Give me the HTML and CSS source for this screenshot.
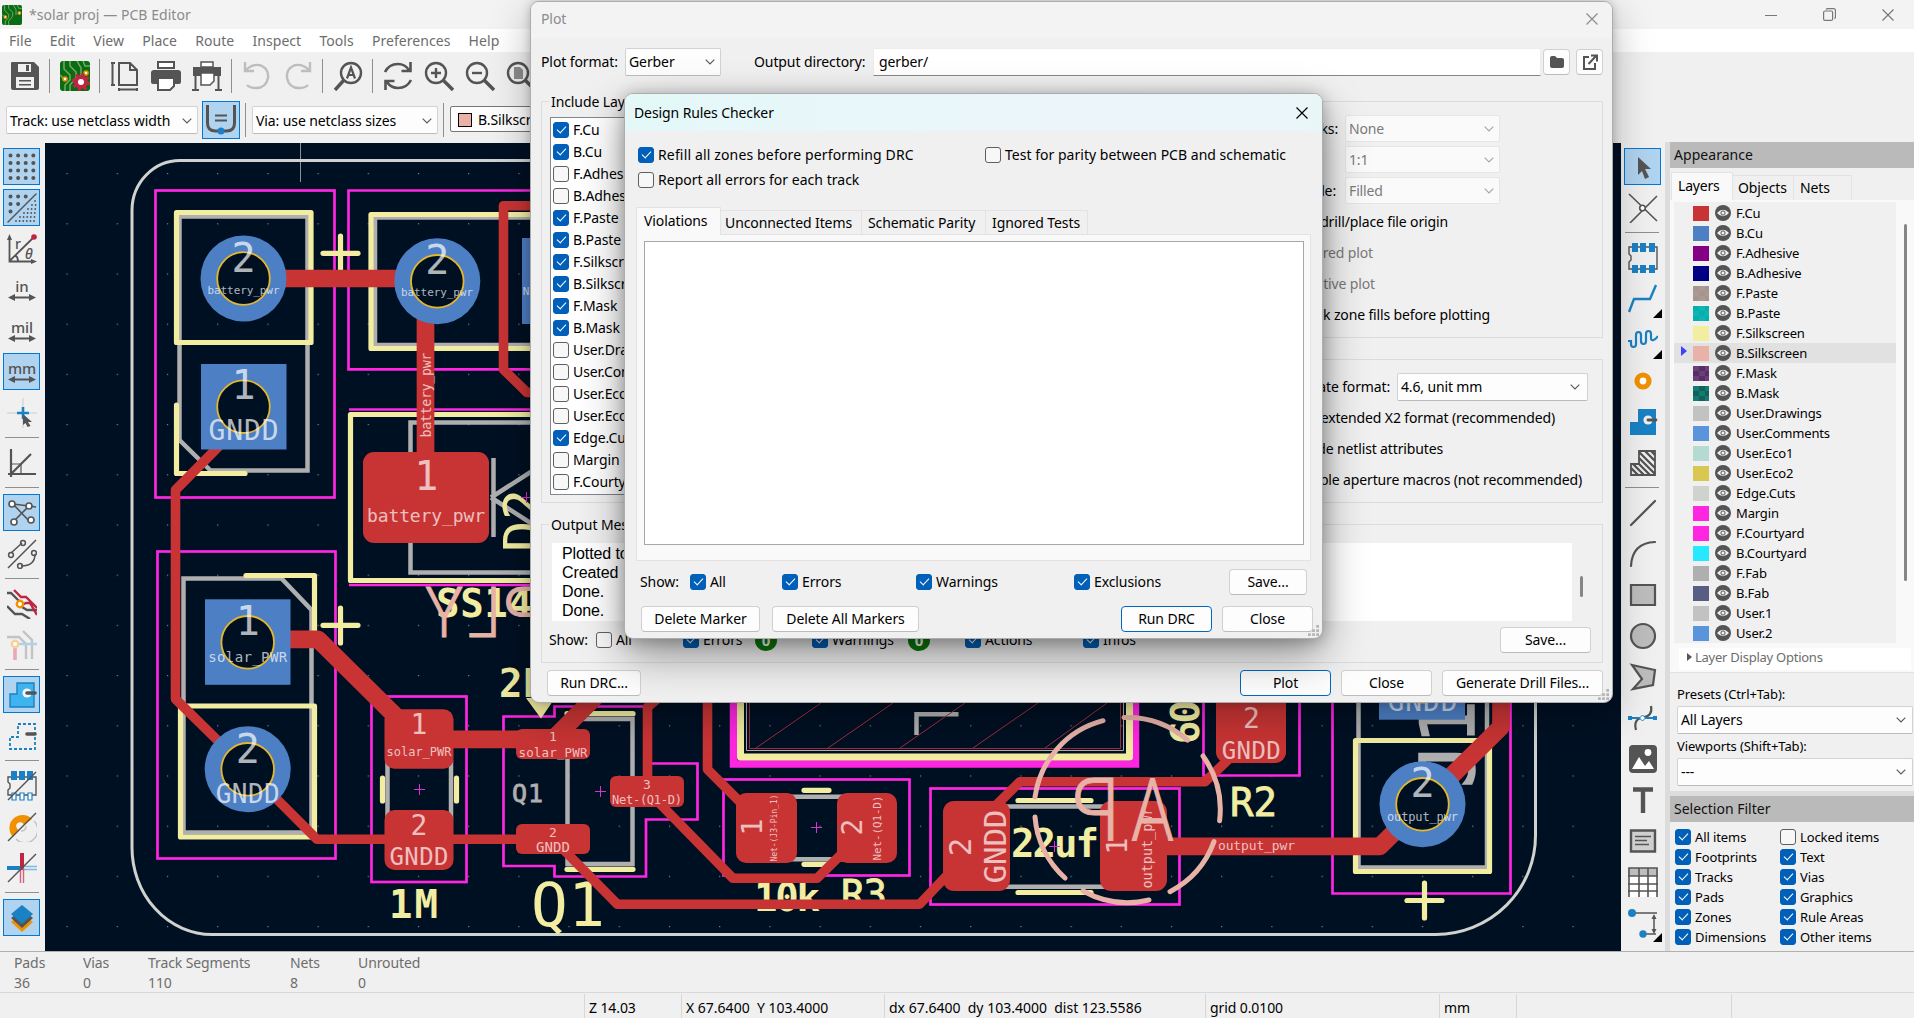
FILE: index.html
```html
<!DOCTYPE html>
<html lang="en">
<head>
<meta charset="utf-8">
<title>*solar proj — PCB Editor</title>
<link rel="stylesheet" href="styles.css">
</head>
<body>
<svg class="defs" width="0" height="0">
  <symbol id="eye" viewBox="0 0 16 16"><circle cx="8" cy="8" r="8" fill="#545454"/><path d="M2 8Q8 1.500 14 8Q8 14.500 2 8Z" fill="#f0f0f0"/><circle cx="8" cy="8" r="2.100" fill="#f0f0f0" stroke="#545454" stroke-width="1"/></symbol>
  <symbol id="chev" viewBox="0 0 10 6"><path d="M.7.7L5 5L9.300.7" fill="none" stroke="currentColor" stroke-width="1.100"/></symbol>
  <symbol id="grip" viewBox="0 0 12 12"><path d="M9 0h3v3h-3zM9 4.500h3v3h-3zM4.500 4.500h3v3h-3zM9 9h3v3h-3zM4.500 9h3v3h-3zM0 9h3v3h-3z" fill="#b5b5b5"/></symbol>
  <symbol id="x" viewBox="0 0 12 12"><path d="M.5.5L11.500 11.500M11.500.5L.5 11.500" fill="none" stroke="currentColor" stroke-width="1.200"/></symbol>
  <symbol id="board" viewBox="0 0 30 30"><rect width="30" height="30" rx="3" fill="#0a6b14"/><path d="M4 0v8l6 6v5l-5 5v6M10 0v5l6 6v6l-6 7v6M17 0l4 7v8M23 0l2 5h5M0 14l4 4" fill="none" stroke="#6fae62" stroke-width="1.500"/><g fill="#fff" stroke="#f29100" stroke-width="1.600"><circle cx="5" cy="18" r="2"/><circle cx="26" cy="12" r="2"/></g></symbol>
</svg>

<header class="titlebar">
  <svg class="app-icon"><use href="#board"/></svg>
  <span>*solar proj — PCB Editor</span>
  <div class="wincontrols">
    <svg width="12" height="12"><path d="M0 6.500h12" stroke="#777"/></svg>
    <svg width="13" height="13" fill="none" stroke="#777" stroke-width="1.200"><rect x=".6" y="3" width="9" height="9.400" rx="1.500"/><path d="M3 1.500Q3.500.6 5 .6h5.500q2 0 2 2v6q0 1.500-1 2"/></svg>
    <svg width="12" height="12" color="#777"><use href="#x"/></svg>
  </div>
</header>
<nav class="menubar"><span>File</span><span>Edit</span><span>View</span><span>Place</span><span>Route</span><span>Inspect</span><span>Tools</span><span>Preferences</span><span>Help</span></nav>

<div class="toolbar top">
  <i class="btn"><svg viewBox="0 0 30 30"><path fill="#545454" d="M2 1h22l5 5v21q0 2-2 2H3q-2 0-2-2V2q0-1 1-1z"/><path fill="#f0f0f0" d="M8 3h13v8H8zM6 16h18v11H6z"/><path fill="#545454" d="M16 4h3v6h-3zM9 19h12v1.500H9zM9 23h12v1.500H9z"/></svg></i>
  <i class="sep"></i>
  <i class="btn"><svg viewBox="0 0 30 30"><use href="#board"/><circle cx="21" cy="21" r="5" fill="#fff" stroke="#bf2641" stroke-width="4"/><circle cx="21" cy="21" r="7.600" fill="none" stroke="#bf2641" stroke-width="3" stroke-dasharray="3 2.970"/></svg></i>
  <i class="sep"></i>
  <i class="btn"><svg viewBox="0 0 30 30" fill="none" stroke="#545454" stroke-width="2"><path d="M9 2h11l7 7v15H9zM20 2v7h7M2.500 2v22M1 2h4M1 24h4M9 28.500h18M9 27v3M27 27v3"/></svg></i>
  <i class="btn"><svg viewBox="0 0 30 30"><path d="M7 1h16v6H7z" fill="#fff" stroke="#545454" stroke-width="2"/><path d="M3 9h24q3 0 3 3v9q0 2-2 2H2q-2 0-2-2v-9q0-3 3-3z" fill="#545454"/><path d="M7 17h16v8l-4 4H7z" fill="#fff" stroke="#545454" stroke-width="2"/></svg></i>
  <i class="btn"><svg viewBox="0 0 30 30"><path d="M9 1h12v5H9z" fill="#fff" stroke="#545454" stroke-width="1.500"/><path d="M1 6h28v9H1z" fill="#545454"/><path d="M9 12h13v8l-4 4H9z" fill="#fff" stroke="#545454" stroke-width="1.500"/><path d="M3.500 14v14M26.500 14v14M0 29h7M23 29h7" stroke="#545454" stroke-width="2"/></svg></i>
  <i class="sep"></i>
  <i class="btn"><svg viewBox="0 0 30 30" fill="none" stroke="#bdbdbd" stroke-width="2.400"><path d="M3 1v9h9M4 9Q11 2 19 4.500Q27 8 26 17Q24 27 14 27Q8 27 5 24"/></svg></i>
  <i class="btn"><svg viewBox="0 0 30 30" fill="none" stroke="#bdbdbd" stroke-width="2.400"><path d="M27 1v9h-9M26 9Q19 2 11 4.500Q3 8 4 17Q6 27 16 27Q22 27 25 24"/></svg></i>
  <i class="sep"></i>
  <i class="btn"><svg viewBox="0 0 30 30" fill="none" stroke="#545454"><circle cx="18" cy="12" r="10" stroke-width="2.400"/><path d="M11 19L2 29" stroke-width="3.400"/><path d="M14 17.500L18 6.500L22 17.500M15.500 14h5" stroke-width="2.200"/></svg></i>
  <i class="sep"></i>
  <i class="btn"><svg viewBox="0 0 30 30" fill="none" stroke="#545454" stroke-width="2.600"><path d="M2 11Q6 3 15 3Q22 3 26 9M27.500 1v9h-9M28 19Q24 27 15 27Q8 27 4 21M2.500 29v-9h9"/></svg></i>
  <i class="btn"><svg viewBox="0 0 30 30" fill="none" stroke="#545454"><circle cx="12" cy="12" r="10" stroke-width="2.400"/><path d="M19 19L29 29" stroke-width="3.400"/><path d="M7 12h10M12 7v10" stroke-width="2.400"/></svg></i>
  <i class="btn"><svg viewBox="0 0 30 30" fill="none" stroke="#545454"><circle cx="12" cy="12" r="10" stroke-width="2.400"/><path d="M19 19L29 29" stroke-width="3.400"/><path d="M7 12h10" stroke-width="2.400"/></svg></i>
  <i class="btn"><svg viewBox="0 0 30 30" fill="none" stroke="#545454"><circle cx="12" cy="12" r="10" stroke-width="2.400"/><path d="M19 19L29 29" stroke-width="3.400"/><path d="M8 6h6l3 3v9H8z" fill="#8c8c8c" stroke="none"/></svg></i>
</div>
<div class="toolbar second">
  <div class="combo track"><span>Track: use netclass width</span><svg><use href="#chev"/></svg></div>
  <i class="btn on"><svg viewBox="0 0 30 30" fill="none" stroke="#545454" stroke-width="3"><path d="M1.500 0v18q0 8 8 8h11q8 0 8-8V0"/><path d="M9 10.500h12M9 15.500h12" stroke-width="1.800"/><circle cx="15" cy="26" r="3.500" fill="#1a81c4" stroke="none"/></svg></i>
  <i class="vsep"></i>
  <div class="combo via"><span>Via: use netclass sizes</span><svg><use href="#chev"/></svg></div>
  <i class="vsep"></i>
  <div class="combo layer"><b></b><span>B.Silkscreen</span></div>
</div>

<main class="work">
  <div class="toolbar side left">
    <i class="btn on"><svg viewBox="0 0 30 30"><path d="M3.500 3.500h24M3.500 11h24M3.500 18.500h24M3.500 26h24" stroke="#545454" stroke-width="4" stroke-linecap="round" stroke-dasharray="0.01 7.600"/></svg></i>
    <i class="btn on"><svg viewBox="0 0 30 30"><g stroke="#545454" stroke-linecap="round" fill="none"><path d="M3.500 3.500h17M3.500 11h10M3.500 18.500h2" stroke-width="4" stroke-dasharray="0.01 7.600"/><path d="M28 8h1M25 12h4M21 16h8M17 20h12M13 24h16M9 28h20" stroke-width="1.800" stroke-dasharray="0.01 3.600"/><path d="M1 29L29 1" stroke-width="1.400"/></g></svg></i>
    <i class="btn"><svg viewBox="0 0 30 30"><g fill="none" stroke="#545454" stroke-width="1.800"><path d="M2.500 4v23.500H26M2.500 27L26 4M8 21q3 2 3 6"/></g><path d="M0 6L2.500 0L5 6zM24 25l6 2.500l-6 2.500z" fill="#545454"/><circle cx="27" cy="3" r="2.800" fill="#bf2641"/><text x="8" y="15" class="ico-t" font-size="14">r</text><text x="18" y="25" class="ico-t" font-size="14" font-style="italic">θ</text></svg></i>
    <i class="btn"><svg viewBox="0 0 30 30"><text x="15" y="16.500" class="ico-t" font-size="15" text-anchor="middle">in</text><path d="M5 22.500h20" stroke="#545454" stroke-width="2"/><path d="M8 19v7L1 22.500zM22 19v7l7-3.500z" fill="#545454"/></svg></i>
    <i class="btn"><svg viewBox="0 0 30 30"><text x="15" y="16.500" class="ico-t" font-size="15" text-anchor="middle">mil</text><path d="M5 22.500h20" stroke="#545454" stroke-width="2"/><path d="M8 19v7L1 22.500zM22 19v7l7-3.500z" fill="#545454"/></svg></i>
    <i class="btn on"><svg viewBox="0 0 30 30"><text x="15" y="16.500" class="ico-t" font-size="15" text-anchor="middle">mm</text><path d="M5 22.500h20" stroke="#545454" stroke-width="2"/><path d="M8 19v7L1 22.500zM22 19v7l7-3.500z" fill="#545454"/></svg></i>
    <i class="btn"><svg viewBox="0 0 30 30"><path d="M0 15h30M16 0v30" stroke="#ccc"/><path d="M10 15h12M16 9v12" stroke="#1a81c4" stroke-width="2.600"/><path d="M16 16l9 8h-4l2.500 4l-3 1l-2-4l-2.500 2z" fill="#545454"/></svg></i>
    <i class="sep"></i>
    <i class="btn"><svg viewBox="0 0 30 30" fill="none" stroke="#545454" stroke-width="2.200"><path d="M4 1v28M1 26h28M4 26L24 6"/><path d="M5 16h9v10" stroke-width="1.200"/></svg></i>
    <i class="sep"></i>
    <i class="btn on"><svg viewBox="0 0 30 30" fill="none" stroke="#545454" stroke-width="1.600"><path d="M6 6L23 24M7 23L22 8M6 6L22 8l7 1"/><g fill="#fff"><circle cx="5" cy="6" r="3"/><circle cx="22" cy="8" r="3"/><circle cx="24" cy="22" r="3"/><circle cx="7" cy="24" r="3"/></g></svg></i>
    <i class="btn"><svg viewBox="0 0 30 30" fill="none" stroke="#545454" stroke-width="1.500"><path d="M1 29L29 1M4 14L15 4M28 15Q28 27 14 27"/><circle cx="16" cy="4" r="2.400"/><circle cx="4" cy="16" r="2.400"/><circle cx="27" cy="14" r="2.400"/><circle cx="13" cy="27" r="2.400"/></svg></i>
    <i class="sep"></i>
    <i class="btn"><svg viewBox="0 0 30 30" fill="none" stroke-width="2.400"><path d="M0 4h4l11 11M0 17l8 8h7l8 5M15 18l5 3h10" stroke="#545454"/><path d="M7 1l7 7h5l11 11M15 16l4-2h4l7 12" stroke="#bf2641"/><circle cx="13" cy="15" r="3.200" fill="#fff" stroke="#f29100"/></svg></i>
    <i class="btn"><svg viewBox="0 0 30 30" fill="none" stroke-width="2.400"><path d="M0 7h12l7 7v15M16 1l9 9v19" stroke="#c3c3c3"/><path d="M8 16v14" stroke="#e8a9b4" stroke-width="3.600"/><path d="M10 14h20" stroke="#a9d2ec"/><circle cx="8" cy="14" r="3.200" fill="#fff" stroke="#fbcf94"/></svg></i>
    <i class="sep"></i>
    <i class="btn on"><svg viewBox="0 0 30 30"><path d="M10 3h17v24H3V14h7z" fill="#3db4ee" stroke="#1a81c4" stroke-width="1.400"/><circle cx="20" cy="13" r="4.600" fill="#eef6fc"/><path d="M20 13h8" stroke="#545454" stroke-width="3.600" stroke-linecap="round"/></svg></i>
    <i class="btn"><svg viewBox="0 0 30 30"><path d="M11 3h17v25H3V16h8z" fill="none" stroke="#1a81c4" stroke-width="1.800" stroke-dasharray="3 2"/><path d="M20 13h8" stroke="#545454" stroke-width="3.600" stroke-linecap="round"/></svg></i>
    <i class="sep"></i>
    <i class="btn"><svg viewBox="0 0 30 30"><path d="M1 6h28v18H1v-5l2-2v-4l-2-2z" fill="none" stroke="#545454" stroke-width="1.400"/><path d="M4 0h6v9H4zM12 0h6v9h-6zM20 0h6v9h-6z" fill="#1a81c4"/><path d="M5 22h4v7H5zM13 22h4v7h-4zM21 22h4v7h-4z" fill="#fff" stroke="#1a81c4" stroke-width="1.200"/><path d="M1 29L29 1" stroke="#545454" stroke-width="1.400"/></svg></i>
    <i class="btn"><svg viewBox="0 0 30 30" fill="none"><path d="M6 25A12.500 12.500 0 1 1 25 7L17 13A4 4 0 1 0 12 18z" fill="#f29100"/><path d="M27 9A12.500 12.500 0 0 1 9 27M19 14q0 5-5 5" stroke="#c4c4c4" stroke-width="1.500"/><path d="M1 29L29 1" stroke="#545454" stroke-width="1.400"/></svg></i>
    <i class="btn"><svg viewBox="0 0 30 30"><path d="M0 15h15" stroke="#1a81c4" stroke-width="4"/><path d="M15 13.500h15M15 16.500h15" stroke="#7db8dd" stroke-width="1.400"/><path d="M15 0v17" stroke="#bf2641" stroke-width="4"/><path d="M13.500 15v15M16.500 15v15" stroke="#d0657a" stroke-width="1.400"/><path d="M1 29L29 1" stroke="#545454" stroke-width="1.400"/></svg></i>
    <i class="sep"></i>
    <i class="btn on"><svg viewBox="0 0 30 30"><path d="M4 19l11 10l11-10l-4-3H8z" fill="#f29100"/><path d="M4 15l11 10l11-10l-4-3H8z" fill="#545454"/><path d="M15 2L26 11L15 21L4 11z" fill="#1a81c4"/></svg></i>
  </div>

  <svg class="canvas" viewBox="45 143 1576 808" width="1576" height="808">
    <defs><pattern id="dots" x="66.500" y="173" width="50.200" height="50.200" patternUnits="userSpaceOnUse"><rect width="1.200" height="1.200" fill="#7d838c"/></pattern></defs>
    <rect x="45" y="143" width="1576" height="808" fill="#001023"/>
    <rect x="45" y="143" width="1576" height="808" fill="url(#dots)"/>
    <path d="M300.500 143v39" stroke="#8a919a" fill="none"/>
    <path class="edge" d="M180 160.500H1450Q1535.500 160.500 1535.500 250V835A100 99 0 0 1 1436 934.500H212A80 87 0 0 1 132 847V210A48 50 0 0 1 180 160.500Z"/>

    <!-- fabrication outlines -->
    <g class="fab">
      <path d="M179.500 216.500H307.500V470.500H210.500L179.500 440Z"/>
      <path d="M540 217.500H375V345H540"/>
      <path d="M540 422.500H410.500V572.500H540M493.500 458V537M491 497.500L540 466M491 497.500L540 529"/>
      <path d="M183.500 578.500H281.500L311.500 610V832.500H183.500Z"/>
      <path d="M387.500 760V820M451 760V820"/>
      <rect x="567.500" y="719" width="65" height="145"/>
      <path d="M790 796.700H845M790 859.300H845M1005 806.500H1105M1005 886.700H1105M916.500 735V714.300H958.500"/>
      <path d="M1358.500 700V867.500H1487V690"/>
    </g>
    <g class="crt">
      <rect x="155.500" y="190.500" width="179" height="307"/>
      <path d="M540 190.500H348.500V369.300H540M349 409.500H540M349 585H540"/>
      <rect x="157.500" y="551.500" width="178" height="307"/>
      <rect x="371.500" y="696.500" width="95" height="185.500"/>
      <path d="M503.500 716.500H554.500V706.500H646V763.500H697.500V819.500H646V876.500H554.500V866H503.500Z"/>
      <rect x="723.500" y="779.500" width="186" height="96"/>
      <rect x="930.500" y="788.500" width="249" height="116"/>
      <path d="M1203.500 690V775.500H1299.500V690M1332.500 690V893.500H1510.500V690"/>
      <path d="M733.500 690V764H1135.500V690" stroke-width="7.500"/>
    </g>
    <g class="silk">
      <rect x="176.500" y="212.500" width="134.500" height="130"/>
      <path d="M176.500 405V473.500H245M540 214.500H371V348.500H540M540 414.500H350.500V580.500H540"/>
      <path d="M246 575.500H314.500V640M180.500 706H314.500V837H180.500Z"/>
      <path d="M323 253.300H358M340.500 236V272M323 625.300H358M340.500 608V643M1407 900.500H1442M1424.500 883V918"/>
      <path d="M382.500 778V801M456.500 778V801M567 713.700H633M567 869.300H633M804 790.300H829M804 864.300H829M1018 800.500H1091M1018 892.500H1091"/>
      <path d="M740.500 690V757H1129.500V690" stroke-width="7"/>
      <path d="M1355.500 740.500H1489.500V871.500H1355.500Z"/>
      <path d="M526 698H555L541 718.500Z" fill="#f2eda1" stroke="none"/>
    </g>
    <g fill="none"><path d="M746.500 690V750.500H1123.500V690" stroke="#afafaf"/><path d="M749.500 690V748.500H1120.500V690M756 748L821 703M828 748L893 703M900 748L965 703M973 748L1038 703M1045 748L1107 703" stroke="#a02e36"/></g>
    <g class="k fabt">
      <text x="512" y="802" font-size="25" textLength="31" stroke="#afafaf" stroke-width=".8">Q1</text>
      <text transform="translate(1474 788) rotate(-90)" font-size="74" textLength="88" stroke="#afafaf" stroke-width="1.500">J1</text>
    </g>
    <g class="k silkt">
      <text transform="translate(541 552) rotate(-90)" font-size="52" textLength="63">D2</text>
      <g font-weight="bold" font-size="39">
        <text x="436" y="617" textLength="96">SS14</text>
        <text x="499" y="696.500" textLength="48">2N</text>
        <text x="389" y="917.500" textLength="49">1M</text>
        <text x="754" y="910.500" textLength="66">10k</text>
        <text x="1011" y="856.500" textLength="88">22uf</text>
        <text transform="translate(1199 744) rotate(-90)" textLength="44">60</text>
      </g>
      <text x="841" y="908" font-size="39" textLength="46" class="semi">R3</text>
      <text x="1230" y="815.500" font-size="39" textLength="47" class="semi">R2</text>
      <text x="531" y="926" font-size="61" textLength="74">Q1</text>
    </g>

    <!-- copper tracks -->
    <g class="cu">
      <path class="wide" d="M243 278.500H437M425.500 281V497M247 639.300H318L419 739.300H553L612 680"/>
      <path class="wide" d="M1134 846.300H1380L1501 727V690"/>
      <path d="M540 205.700H503.500V369.500L527 392.500H540M225 440L175.500 490V699L247 769.300L317 839.300H553"/>
      <path d="M668 690L647.500 707V791L733 878.300H817L867 829M553 839L617.500 904.300H919.500L975 846"/>
      <path d="M707.500 690V769.300L766 828M976 825L1020 781.700H1205L1251 738"/>
    </g>
    <g fill="#c83434">
      <rect x="363" y="452" width="126" height="91" rx="11"/>
      <rect x="384.500" y="709.300" width="69" height="59.500" rx="10"/><rect x="384.500" y="810" width="69" height="60" rx="10"/>
      <rect x="516" y="729" width="74" height="30" rx="6"/><rect x="516" y="824" width="74" height="30" rx="6"/><rect x="610" y="776" width="74" height="31" rx="6"/>
      <rect x="736" y="793" width="61" height="70" rx="10"/><rect x="837" y="793" width="60" height="70" rx="10"/>
      <rect x="943" y="801" width="67" height="90" rx="11"/><rect x="1100" y="801" width="67" height="90" rx="11"/>
      <rect x="1216" y="680" width="70" height="83" rx="11"/>
    </g>
    <g fill="#4d7fc4">
      <circle cx="243.500" cy="278.500" r="43"/><circle cx="437.300" cy="281.300" r="43"/><rect x="201" y="364" width="85.500" height="85.500"/>
      <rect x="522" y="238" width="40" height="86"/><rect x="205" y="599.300" width="85.500" height="85.500"/><circle cx="247.700" cy="769.300" r="43"/>
      <circle cx="1422.500" cy="804.300" r="43"/><rect x="1379" y="634" width="86" height="85.700"/>
    </g>
    <g fill="#001023" stroke="#e3b72e" stroke-width="1.800">
      <circle cx="243.500" cy="278.500" r="26.300"/><circle cx="437.300" cy="281.300" r="26.300"/><circle cx="243.500" cy="406.700" r="26.300"/>
      <circle cx="247.700" cy="642.300" r="26.300"/><circle cx="247.700" cy="769.300" r="26.300"/><circle cx="1422.500" cy="804.300" r="26.300"/><circle cx="1422.500" cy="676.500" r="26.300"/>
    </g>
    <g class="k padt">
      <g font-size="40">
        <text x="243.500" y="271.700">2</text><text x="437.300" y="274">2</text><text x="243.500" y="399">1</text><text x="247.700" y="634.500">1</text><text x="247.700" y="763">2</text><text x="1422.500" y="797">2</text><text x="426.300" y="489.500">1</text>
      </g>
      <g font-size="28">
        <text x="419" y="733.500">1</text><text x="419" y="834.500">2</text><text x="1251.400" y="728">2</text>
        <text transform="translate(761.500 827) rotate(-90)">1</text><text transform="translate(862 827) rotate(-90)">2</text>
        <text transform="translate(970.500 847) rotate(-90)" font-size="31">2</text><text transform="translate(1127 846) rotate(-90)">1</text>
        <text x="243.500" y="440" textLength="70">GNDD</text><text x="1422.500" y="710.700" textLength="70">GNDD</text>
        <text x="247.700" y="802.500" textLength="64" font-size="26">GNDD</text>
        <text x="419" y="864.500" textLength="59" font-size="24">GNDD</text><text x="1251.200" y="758.700" textLength="59" font-size="24">GNDD</text>
        <text transform="translate(1005.500 846.500) rotate(-90)" textLength="74" font-size="31">GNDD</text>
      </g>
      <g font-size="13">
        <text x="553" y="741">1</text><text x="553" y="836.500">2</text><text x="647" y="789">3</text>
        <text x="553" y="852" textLength="34" font-size="14">GNDD</text>
      </g>
      <text x="243.500" y="294" font-size="11" textLength="72">battery_pwr</text><text x="437" y="296" font-size="11" textLength="72">battery_pwr</text>
      <text transform="translate(430.500 395) rotate(-90)" font-size="13.500" textLength="85">battery_pwr</text>
      <text x="426" y="521.500" font-size="18" textLength="118">battery_pwr</text>
      <text x="247.700" y="662" font-size="14" textLength="79">solar_PWR</text><text x="419" y="756" font-size="12" textLength="65">solar_PWR</text><text x="553" y="757" font-size="12.500" textLength="69">solar_PWR</text>
      <text x="647" y="804" font-size="12" textLength="70">Net-(Q1-D)</text><text x="536" y="295" font-size="11">Net-</text>
      <text transform="translate(776.500 828) rotate(-90)" font-size="8.200" textLength="67">Net-(J3-Pin_1)</text><text transform="translate(881 828) rotate(-90)" font-size="11" textLength="65">Net-(Q1-D)</text>
      <text transform="translate(1152 848) rotate(-90)" font-size="13.500" textLength="81">output_pwr</text>
      <text x="1256.500" y="850" font-size="13" textLength="77">output_pwr</text><text x="1422.500" y="821" font-size="12" textLength="71">output_pwr</text>
    </g>
    <g class="bsilk">
      <path d="M1035 797A92 92 0 0 1 1103 720.700M1124 717.500A92 92 0 0 1 1187.500 740M1203 756A92 92 0 0 1 1219.600 820.700M1214 841.700A92 92 0 0 1 1170 891.700M1149 900A92 92 0 0 1 1083 891M1065 878A92 92 0 0 1 1035 817"/>
      <g class="bt">
        <text transform="translate(1174 840) scale(-1 1)" font-size="88" textLength="43" lengthAdjust="spacingAndGlyphs">A</text>
        <text transform="translate(1120 840) scale(-1 1)" font-size="88" textLength="48" lengthAdjust="spacingAndGlyphs">P</text>
        <text transform="translate(547 637) scale(-1 1)" font-size="71">P</text>
        <text transform="translate(501 637) scale(-1 1)" font-size="71" textLength="33" lengthAdjust="spacingAndGlyphs">L</text>
        <text transform="translate(463 637) scale(-1 1)" font-size="71" textLength="38" lengthAdjust="spacingAndGlyphs">Y</text>
      </g>
    </g>
    <path d="M521 497.500h11M526.500 492v11M414 789.500h11M419.500 784v11M595 791.500h11M600.500 786v11M811 827.500h11M816.500 822v11M1049 846.500h11M1054.500 841v11" stroke="#e02fd0"/>
  </svg>

  <div class="toolbar side right">
    <i class="btn on"><svg viewBox="0 0 30 30"><path d="M10 5l13 12h-6l4 8l-4 2l-3-8l-4 4z" fill="#545454"/></svg></i>
    <i class="btn"><svg viewBox="0 0 30 30" fill="none" stroke="#545454" stroke-width="1.600"><path d="M1 1L29 28M29 3L2 30"/><circle cx="14.500" cy="15" r="2.800" fill="#fff"/></svg></i>
    <i class="sep"></i>
    <i class="btn"><svg viewBox="0 0 30 30"><path d="M1 4h28v22H1v-7l2-2v-4l-2-2z" fill="none" stroke="#545454" stroke-width="1.400"/><path d="M4 0h6v9H4zM12 0h6v9h-6zM21 0h6v9h-6zM4 22h6v8H4zM12 22h6v8h-6zM21 22h6v8h-6z" fill="#1a81c4"/></svg></i>
    <i class="btn more"><svg viewBox="0 0 30 30"><path d="M1 28L6 15H22L28 1" fill="none" stroke="#1a81c4" stroke-width="2.400"/></svg></i>
    <i class="btn more"><svg viewBox="0 0 30 30"><path d="M0 16h3v3q0 3 2.500 3T8 19V10q0-3 2.500-3T13 10v6q0 3 2.500 3T18 16V9q0-3 2.500-3T23 9v4q0 3 2.500 2T30 11" fill="none" stroke="#1a81c4" stroke-width="2.200"/></svg></i>
    <i class="btn"><svg viewBox="0 0 30 30"><circle cx="15" cy="15" r="6" fill="#fff" stroke="#f29100" stroke-width="5.200"/></svg></i>
    <i class="btn"><svg viewBox="0 0 30 30"><path d="M10 2h18v26H2V15h8z" fill="#1a81c4"/><circle cx="20" cy="13" r="4.600" fill="#eee"/><path d="M20 13h8" stroke="#545454" stroke-width="2.800" stroke-linecap="round"/></svg></i>
    <i class="btn"><svg viewBox="0 0 30 30"><path d="M11 3h16v24H3V16h8z" fill="none" stroke="#545454" stroke-width="1.800"/><path d="M3 20l7 7M5 16l11 11M11 16l11 11M11 10l16 16M11 4l16 16M17 3l10 10M23 3l4 4" stroke="#545454" stroke-width="2.400"/></svg></i>
    <i class="sep"></i>
    <i class="btn"><svg viewBox="0 0 30 30"><path d="M3 27L27 3" stroke="#545454" stroke-width="2.200" stroke-linecap="round"/></svg></i>
    <i class="btn"><svg viewBox="0 0 30 30"><path d="M3 27Q4 4 27 3" fill="none" stroke="#545454" stroke-width="2.200" stroke-linecap="round"/></svg></i>
    <i class="btn"><svg viewBox="0 0 30 30"><path d="M3 5h24v20H3z" fill="#bdbdbd" stroke="#545454" stroke-width="2.200"/></svg></i>
    <i class="btn"><svg viewBox="0 0 30 30"><circle cx="15" cy="15" r="12" fill="#bdbdbd" stroke="#545454" stroke-width="2.200"/></svg></i>
    <i class="btn"><svg viewBox="0 0 30 30"><path d="M4 3L27 8L25 23L5 27L14 17Z" fill="#bdbdbd" stroke="#545454" stroke-width="2.200"/></svg></i>
    <i class="btn"><svg viewBox="0 0 30 30" fill="none"><path d="M8 27Q5 16 15 14.500T23 3" stroke="#545454" stroke-width="2.200"/><path d="M1 15h27" stroke="#1a81c4" stroke-width="2"/><path d="M0 13h4v4H0zM25 13h4v4h-4z" fill="#1a81c4"/><path d="M14.500 12l3 3l-3 3l-3-3z" fill="#fff" stroke="#1a81c4"/></svg></i>
    <i class="btn"><svg viewBox="0 0 30 30"><rect x="1" y="1" width="28" height="28" rx="4" fill="#545454"/><path d="M4 25l7-12l6 9l4-5l5 8z" fill="#fff"/><circle cx="20" cy="8.500" r="3.400" fill="#fff"/></svg></i>
    <i class="btn"><svg viewBox="0 0 30 30"><path d="M5 4.500h20M15 3v25" stroke="#545454" stroke-width="4.400"/></svg></i>
    <i class="btn"><svg viewBox="0 0 30 30"><path d="M3 4.500h24v21H3z" fill="#cfcfcf" stroke="#545454" stroke-width="2.400"/><path d="M7 10.500h16M7 14.500h12M7 18.500h14" stroke="#545454" stroke-width="1.600"/></svg></i>
    <i class="btn"><svg viewBox="0 0 30 30"><path d="M1 1h28v29H1z" fill="#fff"/><path d="M0 1h30v8H0z" fill="#bdbdbd"/><path d="M1 30V1h28v29M0 9h30M0 17h30M0 24h30M11 1v29M20 1v29" fill="none" stroke="#545454" stroke-width="1.600"/></svg></i>
    <i class="btn more"><svg viewBox="0 0 30 30"><path d="M4 5h25M15 26h13M26 8v16" stroke="#545454" stroke-width="1.500"/><path d="M26 6l2.500 5h-5zM26 26l2.500-5h-5z" fill="#545454"/><circle cx="4" cy="5" r="4" fill="#1a81c4"/><circle cx="15" cy="26" r="3.700" fill="#1a81c4"/></svg></i>
  </div>

  <aside class="panel">
    <h2>Appearance</h2>
    <div class="tabs"><span class="sel">Layers</span><span>Objects</span><span class="nets">Nets</span></div>
    <div class="tabbody">
      <div class="layers">
        <div><b style="background:#c83434"></b><svg><use href="#eye"/></svg>F.Cu</div>
        <div><b style="background:#4d7fc4"></b><svg><use href="#eye"/></svg>B.Cu</div>
        <div><b style="background:#840084"></b><svg><use href="#eye"/></svg>F.Adhesive</div>
        <div><b style="background:#000084"></b><svg><use href="#eye"/></svg>B.Adhesive</div>
        <div><b class="chk" style="background-color:#a6958d"></b><svg><use href="#eye"/></svg>F.Paste</div>
        <div><b class="chk" style="background-color:#03b0ac"></b><svg><use href="#eye"/></svg>B.Paste</div>
        <div><b style="background:#f2eda1"></b><svg><use href="#eye"/></svg>F.Silkscreen</div>
        <div class="cur"><b style="background:#e8b2a7"></b><svg><use href="#eye"/></svg>B.Silkscreen</div>
        <div><b class="chk dk" style="background-color:#6c3c7c"></b><svg><use href="#eye"/></svg>F.Mask</div>
        <div><b class="chk dk" style="background-color:#147a72"></b><svg><use href="#eye"/></svg>B.Mask</div>
        <div><b style="background:#c2c2c2"></b><svg><use href="#eye"/></svg>User.Drawings</div>
        <div><b style="background:#5994dc"></b><svg><use href="#eye"/></svg>User.Comments</div>
        <div><b style="background:#b4dbd2"></b><svg><use href="#eye"/></svg>User.Eco1</div>
        <div><b style="background:#d8c852"></b><svg><use href="#eye"/></svg>User.Eco2</div>
        <div><b style="background:#d0d2cd"></b><svg><use href="#eye"/></svg>Edge.Cuts</div>
        <div><b style="background:#ff26e2"></b><svg><use href="#eye"/></svg>Margin</div>
        <div><b style="background:#ff26e2"></b><svg><use href="#eye"/></svg>F.Courtyard</div>
        <div><b style="background:#26e9ff"></b><svg><use href="#eye"/></svg>B.Courtyard</div>
        <div><b style="background:#afafaf"></b><svg><use href="#eye"/></svg>F.Fab</div>
        <div><b style="background:#585d84"></b><svg><use href="#eye"/></svg>B.Fab</div>
        <div><b style="background:#c2c2c2"></b><svg><use href="#eye"/></svg>User.1</div>
        <div><b style="background:#5994dc"></b><svg><use href="#eye"/></svg>User.2</div>
      </div>
      <i class="scroll"></i>
    </div>
    <div class="ldo"><span>Layer Display Options</span></div>
    <div class="presets">
      <label>Presets (Ctrl+Tab):</label><div class="combo"><span>All Layers</span><svg><use href="#chev"/></svg></div>
      <label>Viewports (Shift+Tab):</label><div class="combo"><span>---</span><svg><use href="#chev"/></svg></div>
    </div>
    <h2 class="sf">Selection Filter</h2>
    <div class="filter">
      <span><i class="cb on"></i>All items</span><span><i class="cb"></i>Locked items</span>
      <span><i class="cb on"></i>Footprints</span><span><i class="cb on"></i>Text</span>
      <span><i class="cb on"></i>Tracks</span><span><i class="cb on"></i>Vias</span>
      <span><i class="cb on"></i>Pads</span><span><i class="cb on"></i>Graphics</span>
      <span><i class="cb on"></i>Zones</span><span><i class="cb on"></i>Rule Areas</span>
      <span><i class="cb on"></i>Dimensions</span><span><i class="cb on"></i>Other items</span>
    </div>
  </aside>
</main>

<div class="msgpanel">
  <div>Pads<br>36</div><div>Vias<br>0</div><div>Track Segments<br>110</div><div>Nets<br>8</div><div>Unrouted<br>0</div>
</div>
<footer class="status"><span></span><span>Z 14.03</span><span>X 67.6400&nbsp; Y 103.4000</span><span>dx 67.6400&nbsp; dy 103.4000&nbsp; dist 123.5586</span><span>grid 0.0100</span><span>mm</span><span></span><span></span></footer>

<section class="dialog plot">
  <div class="dtitle"><span>Plot</span><svg><use href="#x"/></svg></div>
  <div class="fmt">
    <label class="l1">Plot format:</label><div class="combo"><span>Gerber</span><svg><use href="#chev"/></svg></div>
    <label class="l2">Output directory:</label><div class="input">gerber/</div>
    <button class="sq"><svg viewBox="0 0 16 14"><path d="M1 3q0-2 2-2h3l2 2h5q2 0 2 2v6q0 2-2 2H3q-2 0-2-2z" fill="#545454"/></svg></button>
    <button class="sq b2"><svg viewBox="0 0 16 16" fill="none" stroke="#545454" stroke-width="2"><path d="M7 3H2v12h11V9M6.500 10L14 2M9 1.500h6v6"/></svg></button>
  </div>
  <div class="cols">
    <div class="group">
      <span class="legend">Include Layers</span>
      <div class="list">
        <span><i class="cb on"></i>F.Cu</span><span><i class="cb on"></i>B.Cu</span><span><i class="cb"></i>F.Adhesive</span><span><i class="cb"></i>B.Adhesive</span><span><i class="cb on"></i>F.Paste</span><span><i class="cb on"></i>B.Paste</span><span><i class="cb on"></i>F.Silkscreen</span><span><i class="cb on"></i>B.Silkscreen</span><span><i class="cb on"></i>F.Mask</span><span><i class="cb on"></i>B.Mask</span><span><i class="cb"></i>User.Drawings</span><span><i class="cb"></i>User.Comments</span><span><i class="cb"></i>User.Eco1</span><span><i class="cb"></i>User.Eco2</span><span><i class="cb on"></i>Edge.Cuts</span><span><i class="cb"></i>Margin</span><span><i class="cb"></i>F.Courtyard</span>
      </div>
    </div>
    <div class="rightcol">
      <div class="group opts">
        <div class="r"><label>Drill marks:</label><div class="combo dis"><span>None</span><svg><use href="#chev"/></svg></div></div>
        <div class="r"><label></label><div class="combo dis"><span>1:1</span><svg><use href="#chev"/></svg></div></div>
        <div class="r e"><label>Plot mode:</label><div class="combo dis"><span>Filled</span><svg><use href="#chev"/></svg></div></div>
        <div class="r" style="width:257px">Use drill/place file origin</div>
        <div class="r g" style="width:182px">Mirrored plot</div>
        <div class="r g" style="width:184px">Negative plot</div>
        <div class="r" style="width:299px">Check zone fills before plotting</div>
      </div>
      <div class="group gerb">
        <div class="r"><label>Coordinate format:</label><div class="combo"><span>4.6, unit mm</span><svg><use href="#chev"/></svg></div></div>
        <div class="r" style="width:364px">Use extended X2 format (recommended)</div>
        <div class="r" style="width:252px">Include netlist attributes</div>
        <div class="r" style="width:391px">Disable aperture macros (not recommended)</div>
      </div>
    </div>
  </div>
  <div class="group out">
    <span class="legend">Output Messages</span>
    <div class="log"><pre>Plotted to
Created
Done.
Done.</pre><i></i></div>
    <div class="show">
      <span class="s0">Show:</span><span class="s1"><i class="cb"></i>All</span><span class="s2"><i class="cb on"></i>Errors</span><em>0</em><span class="s3"><i class="cb on"></i>Warnings</span><em>0</em><span class="s4"><i class="cb on"></i>Actions</span><span class="s5"><i class="cb on"></i>Infos</span><button class="w91">Save...</button>
    </div>
  </div>
  <div class="bar"><button class="run">Run DRC...</button><button class="w91 def">Plot</button><button class="w91">Close</button><button class="gen">Generate Drill Files...</button></div>
  <svg class="grip"><use href="#grip"/></svg>
</section>

<section class="dialog drc">
  <div class="dtitle"><span>Design Rules Checker</span><svg><use href="#x"/></svg></div>
  <div class="checks"><span class="refill"><i class="cb on"></i>Refill all zones before performing DRC</span><span><i class="cb"></i>Test for parity between PCB and schematic</span><span><i class="cb"></i>Report all errors for each track</span></div>
  <div class="tabs"><span class="sel">Violations</span><span>Unconnected Items</span><span>Schematic Parity</span><span>Ignored Tests</span></div>
  <div class="pane"><div class="tree"></div></div>
  <div class="show"><span class="s0">Show:</span><span class="s1"><i class="cb on"></i>All</span><span class="s2"><i class="cb on"></i>Errors</span><span class="s3"><i class="cb on"></i>Warnings</span><span class="s4"><i class="cb on"></i>Exclusions</span><button>Save...</button></div>
  <div class="bar"><button class="dm">Delete Marker</button><button class="dam">Delete All Markers</button><button class="w91 def">Run DRC</button><button class="w91">Close</button></div>
  <svg class="grip"><use href="#grip"/></svg>
</section>
</body>
</html>
```
FILE: styles.css
```css
* { box-sizing: border-box; }
body {
  margin: 0; width: 1914px; height: 1018px; overflow: hidden; position: relative;
  background: #f0f0f0; color: #000;
  font: 14px/20px "Noto Sans", "Open Sans", sans-serif; letter-spacing: -0.1px;
  display: flex; flex-direction: column;
}
.defs { position: absolute; }
i { font-style: normal; }
span, label, button { white-space: nowrap; }

/* window chrome */
.titlebar { height: 29px; flex: none; background: #f3f3f3; color: #8b8b8b; display: flex; align-items: center; padding-left: 2px; letter-spacing: .05px; }
.app-icon { width: 20px; height: 20px; margin-right: 7px; }
.wincontrols { margin-left: auto; display: flex; gap: 46px; padding-right: 20px; align-items: center; }
.menubar { height: 23px; flex: none; background: #fff; color: #6d6d6d; display: flex; gap: 18.200px; padding: 1px 0 0 9px; align-items: center; letter-spacing: .05px; }

/* toolbars */
.toolbar { display: flex; flex: none; gap: 4px; }
.btn { width: 37px; height: 37px; flex: none; display: flex; align-items: center; justify-content: center; position: relative; }
.btn svg { width: 30px; height: 30px; display: block; }
.btn.on { background: #b0d3ef; border: 1px solid #0078d7; }
.btn.more::after { content: ""; position: absolute; right: -1px; bottom: -1px; border-left: 9px solid transparent; border-bottom: 9px solid #000; }
.ico-t { font-family: "Noto Sans", sans-serif; fill: #545454; font-weight: 500; }
.top { height: 49px; padding: 5px 6px 0; }
.top .sep { width: 5px; height: 34px; margin-top: 2px; background: linear-gradient(90deg, transparent 2px, #8f8f8f 2px 3px, transparent 3px); }
.second { height: 41px; padding-left: 6px; gap: 0; }
.second .btn { margin: 0 5px 0 4px; width: 38px; height: 38px; }
.second .combo { margin-top: 5px; padding-top: 1px; }
.track { width: 192px; }
.via { width: 186px; margin-left: 6px; }
.vsep { width: 1px; height: 34px; margin-top: 2px; background: #8f8f8f; }
.via + .vsep { margin-left: 5px; }
.second .layer { width: 200px; height: 26px; margin-left: 6px; border: 1px solid #777; padding-left: 7px; }
.layer b { width: 14px; height: 14px; border: 1px solid #000; background: #e8b2a7; margin-right: 6px; }
.side { flex-direction: column; padding-top: 6px; }
.side .sep { height: 5px; width: 34px; background: linear-gradient(transparent 2px, #8f8f8f 2px 3px, transparent 3px); margin-left: 1px; }
.left { width: 45px; padding-left: 3px; }
.left .sep { margin-left: 2px; }
.right { width: 44px; padding-left: 3px; }

.combo { height: 28px; background: #fdfdfd; border: 1px solid #d2d2d2; border-bottom-color: #bbb; border-radius: 2px; display: flex; align-items: center; padding: 0 4px 0 3px; color: #000; }
.combo svg { width: 10px; height: 6px; margin-left: auto; margin-right: 1px; color: #555; }
.combo.dis { background: #fafafa; border-color: #e6e6e6; color: #7a7a7a; height: 27px; }
.combo.dis svg { color: #a5a5a5; }

.work { height: 809px; flex: none; display: flex; }
.canvas { flex: none; margin-top: 1px; display: block; }
.edge { fill: none; stroke: #d0d2cd; stroke-width: 3; }
.fab { fill: none; stroke: #afafaf; stroke-width: 4.5; }
.crt { fill: none; stroke: #ff26e2; stroke-width: 2.7; }
.silk { fill: none; stroke: #f2eda1; stroke-width: 5.2; stroke-linejoin: round; stroke-linecap: round; }
.cu { fill: none; stroke: #c83434; stroke-width: 9.6; stroke-linejoin: round; stroke-linecap: round; }
.cu .wide { stroke-width: 17.7; }
.k { font-family: "DejaVu Sans Mono", monospace; letter-spacing: 0; }
.fabt { fill: #afafaf; }
.silkt { fill: #f2eda1; }
.semi { stroke: #f2eda1; stroke-width: .9; }
.padt { fill: #fff; fill-opacity: .7; text-anchor: middle; }
.bsilk { fill: none; stroke: #e8b2a7; stroke-width: 5; stroke-linecap: round; }
.bt { fill: #e8b2a7; stroke: #e8b2a7; stroke-width: .8; font-family: Roboto, sans-serif; font-weight: 300; letter-spacing: 0; }

/* appearance panel */
.panel { width: 249px; flex: none; border-left: 5px solid #dcdcdc; display: flex; flex-direction: column; }
.panel h2 { margin: 0; height: 26px; flex: none; background: #bababa; font-size: 14px; font-weight: 400; line-height: 26px; padding-left: 4px; color: #111; letter-spacing: .05px; }
.tabs { display: flex; align-items: flex-end; }
.tabs span { border: 1px solid #e3e3e3; border-bottom: 0; border-left: 0; height: 25px; padding: 2px 0 0 5px; }
.tabs .sel { background: #f9f9f9; height: 28px; border-left: 1px solid #e3e3e3; position: relative; padding-top: 3px; padding-left: 7px; }
.panel .tabs { height: 32px; padding-left: 1px; }
.panel .tabs .sel { width: 62px; padding-left: 6px; font-size: 14px; letter-spacing: -.2px; }
.panel .tabs span { width: 61px; }
.panel .tabs .nets { width: 58px; padding-left: 6px; }
.tabbody { height: 444px; flex: none; background: #f9f9f9; padding: 2px 0 0 4px; display: flex; }
.layers { width: 222px; height: 441px; overflow: hidden; background: #f0f0f0; padding-top: 1px; font-size: 13px; }
.layers div { height: 20px; display: flex; align-items: center; padding-left: 19px; position: relative; letter-spacing: -.15px; }
.layers b { width: 16px; height: 15px; margin-right: 6px; }
.layers svg { width: 16px; height: 16px; margin-right: 5px; }
.layers .cur { background: #e1e1e1; }
.cur::before { content: ""; position: absolute; left: 7px; top: 3px; border: 5.500px solid transparent; border-left: 6px solid #4040ff; border-right: 0; }
.chk { background-image: conic-gradient(rgba(255,255,255,.05) 25%, transparent 0 50%, rgba(255,255,255,.05) 0 75%, transparent 0); background-size: 12px 10px; }
.chk.dk { background-image: conic-gradient(rgba(0,0,0,.2) 25%, transparent 0 50%, rgba(0,0,0,.2) 0 75%, transparent 0); }
.scroll { width: 3px; height: 357px; margin: 22px 0 0 8px; background: #868686; border-radius: 2px; }
.ldo { height: 29px; flex: none; background: #f9f9f9; border-bottom: 1px solid #e3e3e3; padding: 4px 3px 0 9px; }
.ldo span { display: block; height: 22px; background: #fff; color: #6d6d6d; font-size: 13px; line-height: 19px; padding-left: 16px; position: relative; letter-spacing: -.25px; }
.ldo span::before { content: ""; position: absolute; left: 8px; top: 5px; border: 4.500px solid transparent; border-left: 5px solid #555; border-right: 0; }
.presets { height: 118px; flex: none; padding: 11px 1px 0 7px; }
.presets label { display: block; height: 22px; font-size: 13px; }
.presets .combo { margin-bottom: 2px; padding-right: 5px; }
.panel .sf { border-top: 5px solid #dcdcdc; height: 31px; font-size: 14px; line-height: 25px; letter-spacing: 0; }
.filter { display: grid; grid-template-columns: 105px 1fr; grid-auto-rows: 20px; padding: 5px 0 0 5px; font-size: 13px; }
.filter span { display: flex; align-items: center; }
.cb { display: inline-block; flex: none; width: 16px; height: 16px; border: 1px solid #5f5f5f; border-radius: 3px; background: #f7f7f7; margin-right: 4px; position: relative; }
.cb.on { background: #005fb8; border-color: #005fb8; }
.cb.on::after { content: ""; position: absolute; left: 3px; top: 3px; width: 8px; height: 4px; border: solid #fff; border-width: 0 0 1.200px 1.200px; transform: rotate(-47deg); }

/* bottom strips */
.msgpanel { height: 41px; flex: none; border-top: 1px solid #b0b0b0; color: #6d6d6d; display: flex; padding: 1px 0 0 14px; }
.msgpanel div:nth-child(1) { width: 69px; } .msgpanel div:nth-child(2) { width: 65px; } .msgpanel div:nth-child(3) { width: 142px; } .msgpanel div:nth-child(4) { width: 68px; }
.status { height: 26px; flex: none; border-top: 1px solid #d7d7d7; display: flex; padding-top: 1px; line-height: 28px; }
.status span { border-right: 1px solid #d7d7d7; padding-left: 4px; flex: none; }
.status span:nth-child(1) { width: 585px; } .status span:nth-child(2) { width: 97px; } .status span:nth-child(3) { width: 203px; letter-spacing: 0; } .status span:nth-child(4) { width: 321px; letter-spacing: 0; }
.status span:nth-child(5) { width: 234px; } .status span:nth-child(6) { width: 77px; } .status span:nth-child(7) { width: 215px; } .status span:nth-child(8) { border: 0; }

/* dialogs */
.dialog { position: absolute; background: #f0f0f0; border: 1px solid #adadad; border-radius: 9px; }
.dialog .grip { position: absolute; right: 3px; bottom: 2px; width: 11px; height: 11px; }
.dtitle { display: flex; align-items: center; justify-content: space-between; border-radius: 8px 8px 0 0; }
.dtitle svg { width: 12px; height: 12px; }
button { font: inherit; letter-spacing: inherit; padding: 0; height: 26px; background: #fdfdfd; border: 1px solid #d0d0d0; border-bottom-color: #bbb; border-radius: 4px; color: #000; }
button.def { border-color: #0067c0; }
.w91 { width: 91px; }
.bar { display: flex; }
.show { display: flex; align-items: center; }
.show span { display: flex; align-items: center; flex: none; }
.group { border: 1px solid #dcdcdc; }
.legend { display: block; width: max-content; height: 20px; margin: -11px 0 0 7px; padding: 0 2px; background: #f0f0f0; line-height: 22px; }

.plot { left: 530px; top: 1px; width: 1083px; height: 702px; box-shadow: 0 12px 40px rgba(0,0,0,.28), 0 0 10px rgba(0,0,0,.2); }
.plot .dtitle { height: 36px; background: #f3f3f3; color: #8b8b8b; padding: 0 14px 2px 10px; }
.fmt { height: 48px; display: flex; align-items: center; padding-left: 10px; }
.l1 { width: 84px; } .fmt .combo { width: 96px; } .l2 { margin-left: 33px; width: 119px; }
.input { width: 668px; height: 28px; background: #fff; border: 1px solid #ececec; border-bottom: 1px solid #868686; padding: 3px 5px; }
.sq { width: 27px; margin-left: 2px; display: flex; align-items: center; justify-content: center; }
.sq.b2 { margin-left: 6px; }
.sq svg { width: 16px; height: 16px; }
.cols { margin: 15px 9px 0 10px; height: 402px; display: flex; gap: 9px; }
.cols > .group { width: 640px; }
.list { margin: 6px 8px 0; height: 378px; background: #fff; border: 1px solid #828790; padding: 1px 0 0 2px; }
.list span { display: flex; height: 22px; align-items: center; line-height: 22px; }
.rightcol { flex: 1; display: flex; flex-direction: column; gap: 21px; }
.opts { height: 237px; padding-top: 11px; }
.gerb { flex: 1; padding-top: 11px; }
.r { height: 31px; display: flex; align-items: center; justify-content: flex-end; width: 309px; letter-spacing: -.14px; }
.r label { margin-right: 7px; }
.r.e label { margin-right: 9px; }
.opts .combo { width: 155px; }
.opts .r:nth-child(-n+3) { height: 31px; margin-bottom: 0; }
.g { color: #7a7a7a; }
.gerb .r:first-child { width: 397px; }
.gerb .combo { width: 191px; padding-right: 6px; }
.out { height: 139px; margin: 21px 9px 0 10px; }
.log { margin: 9px 0 0 10px; height: 78px; width: 1032px; display: flex; }
.log pre { margin: 0; width: 1020px; background: #fff; font: 16px/19px "Liberation Sans", sans-serif; padding: 1px 10px; letter-spacing: -.1px; }
.log i { width: 3px; height: 21px; background: #868686; margin: 33px 0 0 8px; border-radius: 2px; }
.out .show { height: 38px; padding: 0 11px 0 7px; }
.out .s0 { width: 47px; } .out .s1 { width: 87px; } .out .s2 { width: 72px; }
.out em { font: bold 15px/21px "Noto Sans", sans-serif; color: #fff; background: #0a7a0a; width: 22px; height: 21px; border-radius: 50%; text-align: center; flex: none; }
.out .s3 { width: 96px; margin-left: 35px; } .out .s4 { width: 118px; margin-left: 35px; }
.out button { margin-left: auto; }
.plot .bar { padding: 7px 9px 0 16px; gap: 10px; }
.run { width: 94px; margin-right: auto; } .gen { width: 161px; }

.drc { left: 624px; top: 93px; width: 699px; height: 546px; box-shadow: 0 16px 44px rgba(0,0,0,.4), 0 2px 16px rgba(0,0,0,.25); }
.drc .dtitle { height: 37px; background: linear-gradient(90deg, #e4f8f8, #ecf5fa 70%, #e9f6f8); padding: 0 14px 0 9px; }
.checks { display: grid; grid-template-columns: 347px 1fr; grid-auto-rows: 25px; padding: 11px 0 0 13px; letter-spacing: .02px; }
.checks span { display: flex; align-items: center; }
.checks .refill { letter-spacing: .15px; }
.drc .tabs { height: 28px; margin: 15px 0 -1px 11px; }
.drc .tabs span:nth-child(1) { width: 85px; } .drc .tabs span:nth-child(2) { width: 141px; padding-left: 4px; } .drc .tabs span:nth-child(3) { width: 124px; padding-left: 6px; } .drc .tabs span:nth-child(4) { width: 102px; padding-left: 6px; }
.pane { margin: 0 11px 0 11px; height: 327px; background: #f9f9f9; border: 1px solid #e3e3e3; padding: 6px 6px 15px 7px; }
.tree { height: 304px; background: #fff; border: 1px solid #a5a7ad; }
.drc .show { height: 41px; padding: 0 15px 0 15px; }
.drc .s0 { width: 50px; } .drc .s1 { width: 92px; } .drc .s2 { width: 134px; } .drc .s3 { width: 158px; }
.drc .show button { margin-left: auto; width: 78px; }
.drc .bar { padding: 4px 9px 0 16px; gap: 10px; }
.dm { width: 119px; } .dam { width: 147px; margin: 0 auto 0 2px; }
```
